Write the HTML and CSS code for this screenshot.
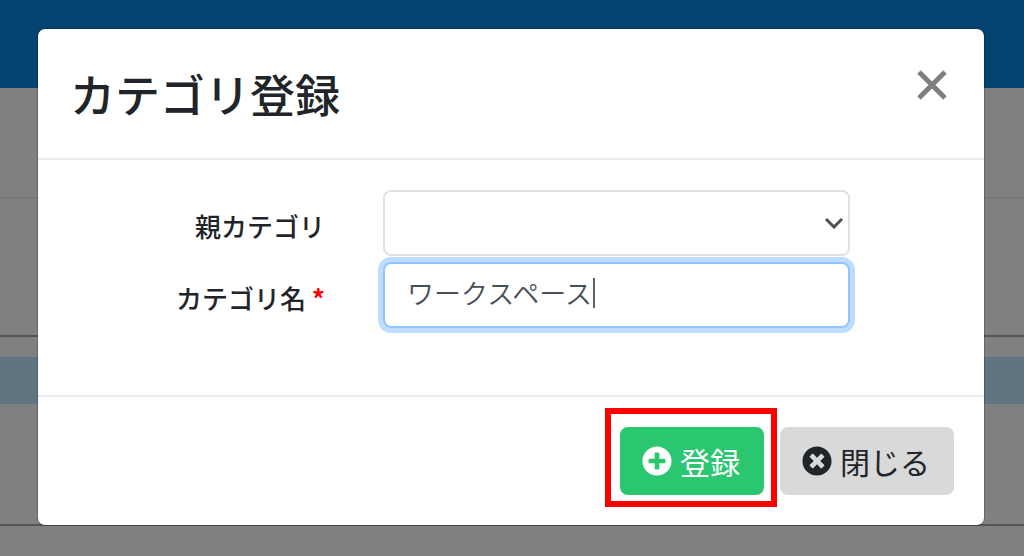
FILE: index.html
```html
<!DOCTYPE html>
<html lang="ja">
<head>
<meta charset="utf-8">
<meta name="viewport" content="width=device-width, initial-scale=1">
<title>カテゴリ登録</title>
<link rel="stylesheet" href="styles.css">
</head>
<body>
<div class="page" aria-hidden="true">
  <div class="page-header"></div>
  <div class="page-toolbar"></div>
  <div class="page-filter"></div>
  <div class="page-table">
    <div class="page-table-head"></div>
  </div>
</div>
<div class="overlay">
  <form class="modal" role="dialog" aria-labelledby="modal-title">
    <header class="modal-header">
      <h1 class="modal-title" id="modal-title">カテゴリ登録</h1>
      <button class="modal-close" type="button" aria-label="Close">
        <svg class="modal-close-icon" viewBox="0 0 32 32"><path d="M3 3L29 29M29 3L3 29"/></svg>
      </button>
    </header>
    <div class="modal-body">
      <label class="label" for="parent">親カテゴリ</label>
      <div class="field">
        <select class="control" id="parent"><option></option></select>
        <svg class="chevron" viewBox="0 0 18 12"><path d="M1 2L9 10L17 2"/></svg>
      </div>
      <label class="label" for="name">カテゴリ名 <span class="required">*</span></label>
      <div class="field">
        <input class="control control-focused" id="name" type="text" value="ワークスペース" required>
        <span class="caret"></span>
      </div>
    </div>
    <footer class="modal-footer">
      <div class="highlight">
        <button class="button button-primary" type="button">
          <svg class="button-icon" viewBox="0 0 512 512"><path d="M256 8C119 8 8 119 8 256s111 248 248 248 248-111 248-248S393 8 256 8zm144 276c0 6.600-5.400 12-12 12h-92v92c0 6.600-5.400 12-12 12h-56c-6.600 0-12-5.400-12-12v-92h-92c-6.600 0-12-5.400-12-12v-56c0-6.600 5.400-12 12-12h92v-92c0-6.600 5.400-12 12-12h56c6.600 0 12 5.400 12 12v92h92c6.600 0 12 5.400 12 12v56z"/></svg>
          登録
        </button>
      </div>
      <button class="button button-secondary" type="button">
        <svg class="button-icon" viewBox="0 0 512 512"><path d="M256 8C119 8 8 119 8 256s111 248 248 248 248-111 248-248S393 8 256 8zm121.600 313.100c4.700 4.700 4.700 12.300 0 17L338 377.600c-4.700 4.700-12.300 4.700-17 0L256 312l-65.100 65.600c-4.700 4.700-12.300 4.700-17 0L134.400 338c-4.700-4.700-4.700-12.300 0-17l65.600-65-65.600-65.100c-4.700-4.700-4.700-12.300 0-17l39.600-39.600c4.700-4.700 12.300-4.700 17 0l65 65.700 65.100-65.600c4.700-4.700 12.300-4.700 17 0l39.600 39.600c4.700 4.700 4.700 12.300 0 17L312 256l65.600 65.100z"/></svg>
        閉じる
      </button>
    </footer>
  </form>
</div>
</body>
</html>
```
FILE: styles.css
```css
* { box-sizing: border-box; }

body {
  margin: 0;
  min-height: 100vh;
  background: #808080;
  color: #212529;
  font-family: "Noto Sans CJK JP", "Noto Sans", sans-serif;
}

.page-header { height: 88px; background: #044370; }
.page-toolbar { height: 111px; border-bottom: 2px solid #747878; }
.page-filter { height: 138px; border-bottom: 2px solid #545454; }
.page-table { height: 189px; padding-top: 20px; border-bottom: 2px solid #545454; }
.page-table-head { height: 47px; background: #5f7680; }

.overlay {
  position: absolute;
  top: 0;
  left: 0;
  right: 0;
  padding: 28px 39px 28px 37px;
}

.modal {
  background: #fff;
  background-clip: padding-box;
  border: 1px solid rgba(0, 0, 0, 0.2);
  border-radius: 8px;
}

.modal-header {
  display: flex;
  align-items: flex-start;
  justify-content: space-between;
  padding: 31px 36px 31px 32px;
  border-bottom: 2px solid #e9ecef;
}

.modal-title {
  margin: 0;
  font-size: 45px;
  font-weight: 500;
  line-height: 67px;
}

.modal-close {
  display: flex;
  margin-top: 9px;
  padding: 0;
  border: 0;
  background: none;
}

.modal-close-icon {
  width: 32px;
  height: 32px;
  fill: none;
  stroke: #7f7f7f;
  stroke-width: 5;
}

.modal-body {
  display: grid;
  grid-template-columns: 287px minmax(0, 467px);
  column-gap: 58px;
  row-gap: 6px;
  padding: 30px 30px 67px 0;
}

.label {
  padding-top: 16px;
  font-size: 26px;
  font-weight: 500;
  line-height: 40px;
  text-align: right;
}

.required {
  color: #f00;
  font-weight: 700;
}

.field { position: relative; }

.control {
  display: block;
  width: 100%;
  height: 66px;
  padding: 0 22px 6px;
  border: 2px solid #dee2e6;
  border-radius: 8px;
  outline: 0;
  background: #fff;
  color: #495057;
  font-family: inherit;
  font-size: 27px;
  font-weight: 350;
  appearance: none;
}

.control-focused {
  border-color: #90c5ff;
  box-shadow: 0 0 0 5px #bfdeff;
}

.chevron {
  position: absolute;
  top: 27px;
  right: 7px;
  width: 18px;
  height: 12px;
  fill: none;
  stroke: #495057;
  stroke-width: 3;
  pointer-events: none;
}

.caret {
  position: absolute;
  top: 16px;
  left: 210px;
  width: 2px;
  height: 30px;
  background: #5d6369;
}

.modal-footer {
  display: flex;
  justify-content: flex-end;
  gap: 16px;
  padding: 30px;
  border-top: 2px solid #e9ecef;
}

.highlight { position: relative; }

.highlight::after {
  content: "";
  position: absolute;
  inset: -19px -13px -12px -15px;
  border: 6px solid #f00;
  pointer-events: none;
}

.button {
  display: flex;
  align-items: center;
  gap: 8px;
  height: 68px;
  padding: 0 24px 0 22px;
  border: 0;
  border-radius: 8px;
  font-family: inherit;
  font-size: 30px;
  line-height: 44px;
}

.button-primary { background: #2ac770; color: #fff; }
.button-secondary { background: #d9d9d9; color: #212529; }

.button-icon {
  width: 30px;
  height: 30px;
  fill: currentColor;
}
```
